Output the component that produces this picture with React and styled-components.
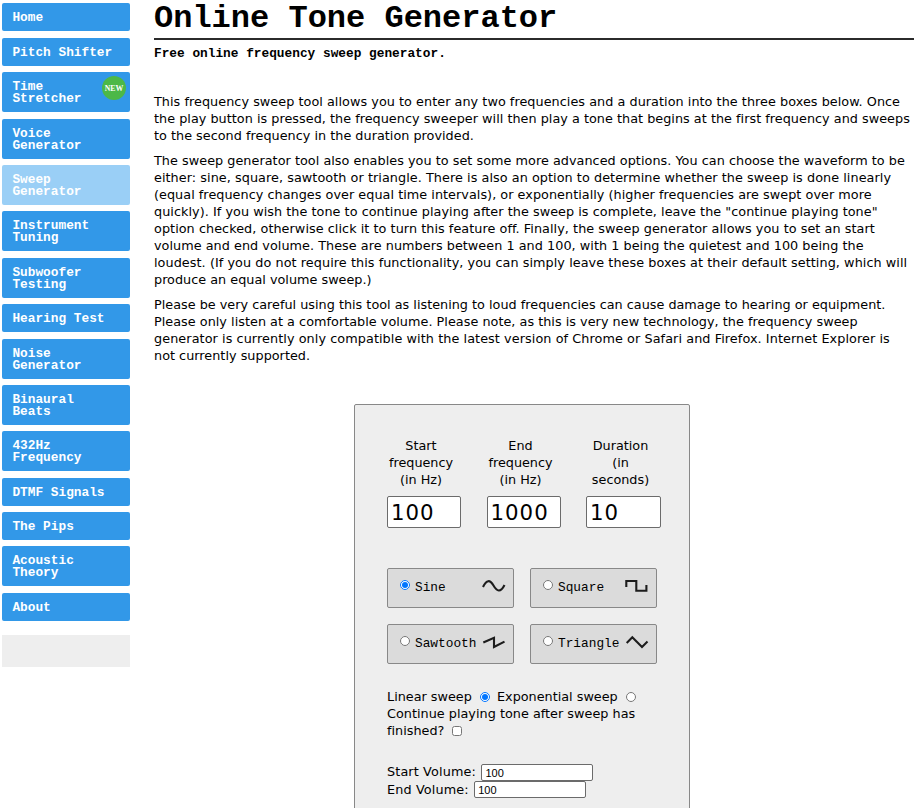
import React from "react";
import styled, { createGlobalStyle } from "styled-components";

const mono = '"Courier New", "Liberation Mono", monospace';
const sans = 'Verdana, "DejaVu Sans", sans-serif';

const GlobalStyle = createGlobalStyle`
  * { box-sizing: border-box; }
  html, body { margin: 0; height: 808px; overflow: hidden; background: #fff; }
  body { font: 12.8px/17px ${sans}; color: #000; }
`;

const Page = styled.div`
  display: flex;
  align-items: flex-start;
  width: 919px;
  height: 808px;
  overflow: hidden;
`;

const Sidebar = styled.aside`
  flex: none;
  width: 130px;
  padding: 3.4px 0 0 2px;
`;

const Nav = styled.nav`
  display: flex;
  flex-direction: column;
  gap: 6.4px;
`;

const NavLink = styled.a`
  position: relative;
  height: ${(p) => (p.$tall ? 40 : 28)}px;
  padding: 9px 0 0 10.4px;
  border-radius: 2px;
  background: ${(p) => (p.$active ? "#9acff6" : "#3298e8")};
  color: #fff;
  font: bold 12.8px/12px ${mono};
  white-space: pre-line;
`;

const Badge = styled.span`
  position: absolute;
  top: 4px;
  right: 4px;
  width: 24px;
  height: 24px;
  border-radius: 50%;
  background: #4cb848;
  font: bold 7.8px/25px "Liberation Serif", serif;
  text-align: center;
`;

const SideBox = styled.div`
  height: 32px;
  margin-top: 14px;
  background: #eee;
`;

const Main = styled.main`
  flex: none;
  width: 760px;
  margin-left: 24px;
`;

const Title = styled.h1`
  height: 40px;
  margin: 0;
  border-bottom: 2px solid #2b2b2b;
  font: bold 32px/37px ${mono};
`;

const Subtitle = styled.h2`
  margin: 5px 0 31px;
  font: bold 12.8px/17px ${mono};
`;

const Paragraph = styled.p`
  margin: 0 0 8px;
`;

const Line = styled.span`
  display: block;
  width: max-content;
  height: 17px;
  white-space: nowrap;
  font-variant-ligatures: none;
  letter-spacing: ${(p) => p.$track || 0}px;
`;

const Form = styled.form`
  width: 336px;
  height: 480px;
  margin: 40px 0 0 200px;
  padding: 32px;
  border: 1px solid #888;
  border-radius: 2px;
  background: #eee;
`;

const Fields = styled.div`
  display: grid;
  grid-template-columns: 74px 74px 75px;
  column-gap: 25.5px;
`;

const Field = styled.label`
  display: flex;
  flex-direction: column;
  align-items: center;
  text-align: center;
  white-space: pre-line;
`;

const Caption = styled.span`
  margin-right: 6px;
`;

const BigInput = styled.input`
  width: 100%;
  height: 32px;
  margin-top: 8px;
  padding: 1px 3px;
  border: 1px solid #6b6b6b;
  border-radius: 2px;
  background: #fff;
  font: 21.3px/28px ${sans};
  letter-spacing: 1px;
  color: #000;
`;

const Waves = styled.div`
  display: grid;
  grid-template-columns: 127px 127px;
  gap: 16px;
  margin-top: 40px;
`;

const Wave = styled.label`
  display: flex;
  align-items: flex-start;
  height: 40px;
  padding: 10px 7px 0 12px;
  border: 1px solid #888;
  border-radius: 2px;
  background: #dbdbdb;
  font: 12.8px/18px ${mono};
`;

const Dot = styled.input`
  flex: none;
  width: 10px;
  height: 10px;
  margin: 0 3px 0 4px;
  vertical-align: -1px;
`;

const WaveDot = styled(Dot)`
  margin: 1px 5px 0 0;
`;

const WaveIcon = styled.svg`
  width: 24px;
  height: 16px;
  margin-left: auto;
  fill: none;
  stroke: #1c1c1c;
  stroke-width: 2.1;
`;

const Options = styled.div`
  margin-top: 24px;
`;

const Volumes = styled.div`
  margin-top: 25px;
`;

const VolumeRow = styled.label`
  display: flex;
  height: 17px;
  gap: 5.5px;
  line-height: ${(p) => p.$leading}px;
  letter-spacing: 0.13px;
`;

const SmallInput = styled.input`
  width: 112px;
  height: 17px;
  padding: 0 3px;
  border: 1px solid #6b6b6b;
  border-radius: 2px;
  background: #fff;
  font: 11px/15px "Liberation Sans", Arial, sans-serif;
  color: #000;
`;

const links = [
  "Home", "Pitch Shifter", "Time\nStretcher", "Voice\nGenerator", "Sweep\nGenerator",
  "Instrument\nTuning", "Subwoofer\nTesting", "Hearing Test", "Noise\nGenerator",
  "Binaural\nBeats", "432Hz\nFrequency", "DTMF Signals", "The Pips", "Acoustic\nTheory", "About",
];

// Each line carries its own letter spacing, in pixels.
const paragraphs = [
  [
    ["This frequency sweep tool allows you to enter any two frequencies and a duration into the three boxes below. Once", 0.044],
    ["the play button is pressed, the frequency sweeper will then play a tone that begins at the first frequency and sweeps", 0.026],
    ["to the second frequency in the duration provided.", 0.02],
  ],
  [
    ["The sweep generator tool also enables you to set some more advanced options. You can choose the waveform to be", 0.036],
    ["either: sine, square, sawtooth or triangle. There is also an option to determine whether the sweep is done linearly", 0.058],
    ["(equal frequency changes over equal time intervals), or exponentially (higher frequencies are swept over more", 0.037],
    ["quickly). If you wish the tone to continue playing after the sweep is complete, leave the \"continue playing tone\"", 0.044],
    ["option checked, otherwise click it to turn this feature off. Finally, the sweep generator allows you to set an start", 0.052],
    ["volume and end volume. These are numbers between 1 and 100, with 1 being the quietest and 100 being the", 0.038],
    ["loudest. (If you do not require this functionality, you can simply leave these boxes at their default setting, which will", 0.064],
    ["produce an equal volume sweep.)", 0.01],
  ],
  [
    ["Please be very careful using this tool as listening to loud frequencies can cause damage to hearing or equipment.", 0.01],
    ["Please only listen at a comfortable volume. Please note, as this is very new technology, the frequency sweep", 0.028],
    ["generator is currently only compatible with the latest version of Chrome or Safari and Firefox. Internet Explorer is", 0.077],
    ["not currently supported.", 0.02],
  ],
];

const fields = [
  ["Start\nfrequency\n(in Hz)", "100"],
  ["End\nfrequency\n(in Hz)", "1000"],
  ["Duration\n(in\nseconds)", "10"],
];

const waves = [
  ["Sine", "M1 8C4.5 0.5 8 0.5 11.5 6.5S18.5 14 22.5 6"],
  ["Square", "M1.3 8V2H11.3V11.8H21.4V6"],
  ["Sawtooth", "M1.3 7.5L12 2.8V12L22.5 6.6"],
  ["Triangle", "M1.7 8L7.3 2.3L17 12L22.5 6.5"],
];

export default function App() {
  return (
    <>
      <GlobalStyle />
      <Page>
        <Sidebar>
          <Nav>
            {links.map((text) => (
              <NavLink key={text} $tall={text.includes("\n")} $active={text.startsWith("Sweep")}>
                {text}
                {text.startsWith("Time") && <Badge>NEW</Badge>}
              </NavLink>
            ))}
          </Nav>
          <SideBox />
        </Sidebar>
        <Main>
          <Title>Online Tone Generator</Title>
          <Subtitle>Free online frequency sweep generator.</Subtitle>
          {paragraphs.map((lines, i) => (
            <Paragraph key={i}>
              {lines.map(([text, track]) => <Line key={text} $track={track}>{text}</Line>)}
            </Paragraph>
          ))}
          <Form>
            <Fields>
              {fields.map(([caption, value]) => (
                <Field key={caption}>
                  <Caption>{caption}</Caption>
                  <BigInput defaultValue={value} />
                </Field>
              ))}
            </Fields>
            <Waves>
              {waves.map(([name, d], i) => (
                <Wave key={name}>
                  <WaveDot type="radio" name="wave" defaultChecked={i === 0} />
                  {name}
                  <WaveIcon viewBox="0 0 24 16"><path d={d} /></WaveIcon>
                </Wave>
              ))}
            </Waves>
            <Options>
              <Line>
                Linear sweep <Dot type="radio" name="curve" defaultChecked /> Exponential sweep{" "}
                <Dot type="radio" name="curve" />
              </Line>
              <Line $track={0.02}>Continue playing tone after sweep has</Line>
              <Line>finished? <Dot type="checkbox" /></Line>
            </Options>
            <Volumes>
              <VolumeRow $leading={16}>Start Volume: <SmallInput defaultValue="100" /></VolumeRow>
              <VolumeRow $leading={18}>End Volume: <SmallInput defaultValue="100" /></VolumeRow>
            </Volumes>
          </Form>
        </Main>
      </Page>
    </>
  );
}
